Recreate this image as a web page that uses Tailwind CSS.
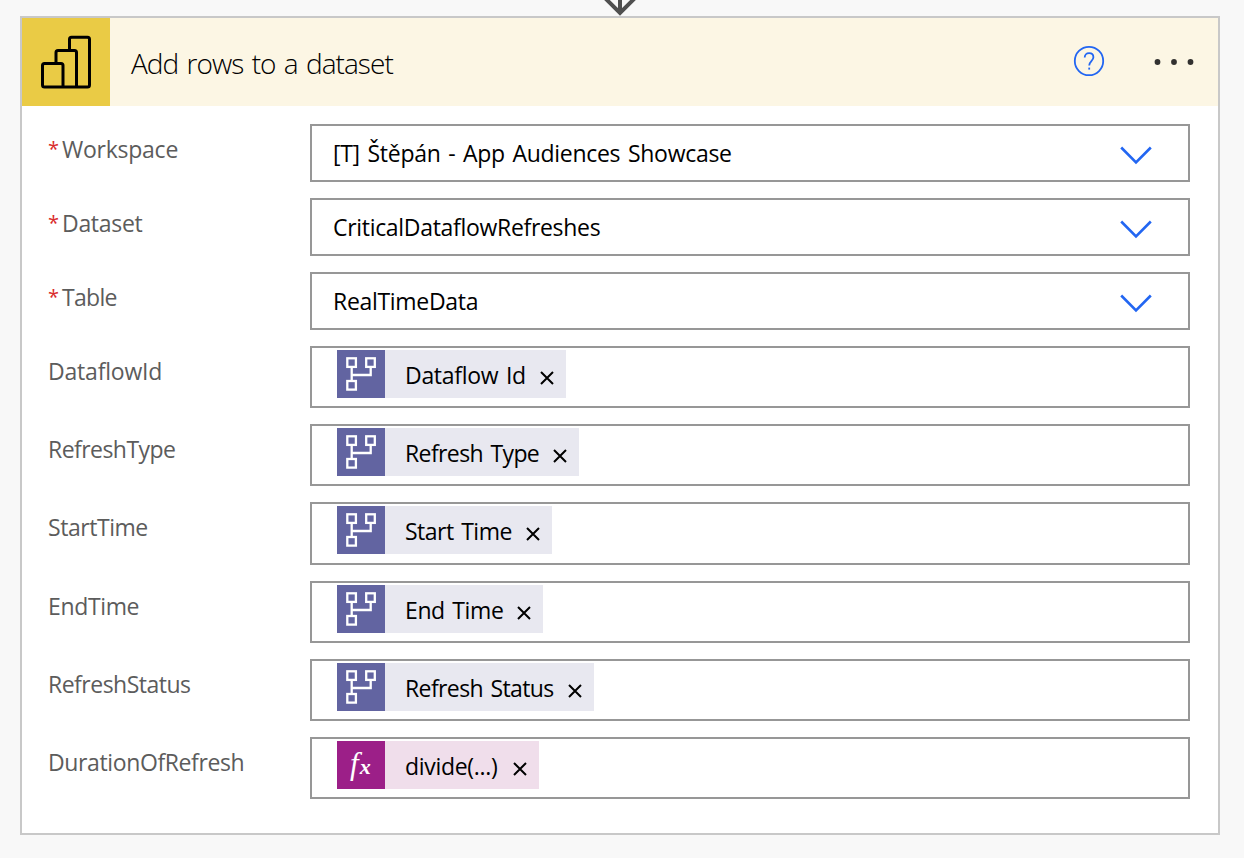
<!DOCTYPE html>
<html lang="en">
<head>
<meta charset="utf-8">
<title>Add rows to a dataset</title>
<script src="https://cdn.jsdelivr.net/npm/@tailwindcss/browser@4"></script>
</head>
<body class="w-[1244px] h-[858px] overflow-hidden bg-[#f8f8f8] font-['Open_Sans','Noto_Sans',sans-serif] text-black">
<svg class="hidden">
  <symbol id="flow" viewBox="0 0 48 48"><g fill="none" stroke="#fff" stroke-width="2.300"><rect x="10.300" y="8.300" width="8.600" height="8.600"/><rect x="29.200" y="8.300" width="8.600" height="8.600"/><rect x="10.300" y="31" width="8.600" height="8.600"/><path d="M14.700 17v14M14.700 25h19V17"/></g></symbol>
  <symbol id="chev" viewBox="0 0 32 20"><path d="M1.2 1.5 16 16.5 30.800 1.5" fill="none" stroke="#2266f2" stroke-width="2.600"/></symbol>
  <symbol id="x" viewBox="0 0 14 14"><path d="M1 1l12 12M13 1L1 13" fill="none" stroke="#000" stroke-width="2"/></symbol>
</svg>
<div class="h-4 flex justify-center pr-1"><svg class="w-10 h-4" viewBox="0 0 40 16"><path d="M20 0v13M3.500-3.500 20 13 36.500-3.500" fill="none" stroke="#505050" stroke-width="4"/></svg></div>
<main class="ml-5 w-[1200px] h-[819px] border-2 border-[#c8c8c8] bg-white">
  <header class="h-22 flex items-center bg-[#fcf6e4]">
    <div class="size-22 bg-[#eacb45]"><svg class="size-22" viewBox="0 0 88 88"><g fill="none" stroke="#000" stroke-width="3"><path d="M47.500 31V21.200a2 2 0 0 1 2-2h16a2 2 0 0 1 2 2V67a2 2 0 0 1-2 2h-43a2 2 0 0 1-2-2V47.500a2 2 0 0 1 2-2H39a2 2 0 0 1 2 2V69"/><path d="M34 45V34.500a2 2 0 0 1 2-2h16.500a2 2 0 0 1 2 2V69"/></g></svg></div>
    <h1 class="ml-5 pt-px pl-px w-[943px] text-[28px] leading-9 font-[340] tracking-[-0.96px] [word-spacing:2px]">Add rows to a dataset</h1>
    <svg class="size-8 -mt-[3px]" viewBox="0 0 32 32"><g fill="none" stroke="#2266f2" stroke-width="1.800"><circle cx="16" cy="16" r="14.200"/><path d="M11.700 12.500c0-2.800 1.800-4.300 4.400-4.300 2.500 0 4.300 1.500 4.300 4 0 3.700-4.200 4.200-4.200 8.300"/><path d="M16.200 22.600v2"/></g></svg>
    <svg class="ml-[47px] w-12 h-8" viewBox="0 0 48 32"><g fill="#323130"><circle cx="5.500" cy="16" r="2.900"/><circle cx="22" cy="16" r="2.900"/><circle cx="38.500" cy="16" r="2.900"/></g></svg>
  </header>
  <div class="pt-[18px] pl-[26px] pr-7 flex flex-col gap-4 text-[23px] leading-8 [word-spacing:2px]">
    <div class="flex h-[58px]"><div class="flex w-[262px] pt-[9px] text-[#5c5c5c]"><span class="w-3.5 text-[20px] text-[#d92b2b]">*</span><span class="tracking-[-0.25px]">Workspace</span></div><div class="w-[880px] border-2 border-[#979797] flex items-center justify-between pl-[21px] pr-9"><span class="tracking-[-0.29px]">[T] Štěpán - App Audiences Showcase</span><svg class="w-8 h-5 mt-1.5"><use href="#chev"/></svg></div></div>
    <div class="flex h-[58px]"><div class="flex w-[262px] pt-[9px] text-[#5c5c5c]"><span class="w-3.5 text-[20px] text-[#d92b2b]">*</span><span class="tracking-[-0.3px]">Dataset</span></div><div class="w-[880px] border-2 border-[#979797] flex items-center justify-between pl-[21px] pr-9"><span class="tracking-[-0.31px]">CriticalDataflowRefreshes</span><svg class="w-8 h-5 mt-1.5"><use href="#chev"/></svg></div></div>
    <div class="flex h-[58px]"><div class="flex w-[262px] pt-[9px] text-[#5c5c5c]"><span class="w-3.5 text-[20px] text-[#d92b2b]">*</span><span class="tracking-[-0.7px]">Table</span></div><div class="w-[880px] border-2 border-[#979797] flex items-center justify-between pl-[21px] pr-9"><span class="tracking-[-0.3px]">RealTimeData</span><svg class="w-8 h-5 mt-1.5"><use href="#chev"/></svg></div></div>
    <div class="flex h-[62px]"><div class="w-[262px] pt-[9px] text-[#5c5c5c]"><span class="tracking-[-0.2px]">DataflowId</span></div><div class="w-[880px] border-2 border-[#979797] pl-[25px] pt-0.5"><div class="flex w-[229px] h-12 items-center justify-between bg-[#e8e8f0] pr-3"><svg class="size-12 bg-[#6264a1]"><use href="#flow"/></svg><span class="ml-5 mr-auto mt-0.5 tracking-[-0.3px]">Dataflow Id</span><svg class="size-3.5 mt-[7px]"><use href="#x"/></svg></div></div></div>
    <div class="flex h-[62px]"><div class="w-[262px] pt-[9px] text-[#5c5c5c]"><span class="tracking-[-0.55px]">RefreshType</span></div><div class="w-[880px] border-2 border-[#979797] pl-[25px] pt-0.5"><div class="flex w-[242px] h-12 items-center justify-between bg-[#e8e8f0] pr-3"><svg class="size-12 bg-[#6264a1]"><use href="#flow"/></svg><span class="ml-5 mr-auto mt-0.5 tracking-[-0.6px]">Refresh Type</span><svg class="size-3.5 mt-[7px]"><use href="#x"/></svg></div></div></div>
    <div class="flex h-[63px]"><div class="w-[262px] pt-[9px] text-[#5c5c5c]"><span class="tracking-[-0.45px]">StartTime</span></div><div class="w-[880px] border-2 border-[#979797] pl-[25px] pt-0.5"><div class="flex w-[215px] h-12 items-center justify-between bg-[#e8e8f0] pr-3"><svg class="size-12 bg-[#6264a1]"><use href="#flow"/></svg><span class="ml-5 mr-auto mt-0.5 tracking-[-0.5px]">Start Time</span><svg class="size-3.5 mt-[7px]"><use href="#x"/></svg></div></div></div>
    <div class="flex h-[62px]"><div class="w-[262px] pt-[9px] text-[#5c5c5c]"><span class="tracking-[-0.35px]">EndTime</span></div><div class="w-[880px] border-2 border-[#979797] pl-[25px] pt-0.5"><div class="flex w-[206px] h-12 items-center justify-between bg-[#e8e8f0] pr-3"><svg class="size-12 bg-[#6264a1]"><use href="#flow"/></svg><span class="ml-5 mr-auto mt-0.5 tracking-[-0.4px]">End Time</span><svg class="size-3.5 mt-[7px]"><use href="#x"/></svg></div></div></div>
    <div class="flex h-[62px]"><div class="w-[262px] pt-[9px] text-[#5c5c5c]"><span class="tracking-[-0.5px]">RefreshStatus</span></div><div class="w-[880px] border-2 border-[#979797] pl-[25px] pt-0.5"><div class="flex w-[257px] h-12 items-center justify-between bg-[#e8e8f0] pr-3"><svg class="size-12 bg-[#6264a1]"><use href="#flow"/></svg><span class="ml-5 mr-auto mt-0.5 tracking-[-0.6px]">Refresh Status</span><svg class="size-3.5 mt-[7px]"><use href="#x"/></svg></div></div></div>
    <div class="flex h-[62px]"><div class="w-[262px] pt-[9px] text-[#5c5c5c]"><span class="tracking-[-0.38px]">DurationOfRefresh</span></div><div class="w-[880px] border-2 border-[#979797] pl-[25px] pt-0.5"><div class="flex w-[202px] h-12 items-center justify-between bg-[#f0deeb] pr-3"><div class="size-12 pl-[13px] bg-[#9c1f88] text-white font-['Liberation_Serif',serif] italic text-[31px] leading-[46px]">f<span class="ml-px text-[22px] font-bold">x</span></div><span class="ml-5 mr-auto mt-0.5 tracking-[-0.3px]">divide(...)</span><svg class="size-3.5 mt-[7px]"><use href="#x"/></svg></div></div></div>
  </div>
</main>
</body>
</html>
